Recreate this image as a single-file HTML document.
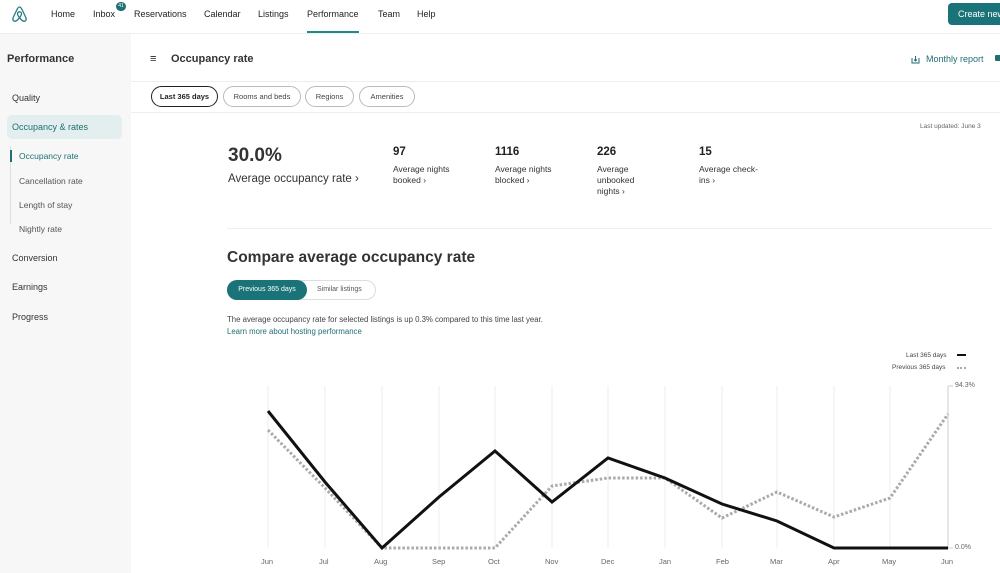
<!DOCTYPE html>
<html><head><meta charset="utf-8"><style>
*{margin:0;padding:0;box-sizing:border-box}
body{width:1000px;height:573px;overflow:hidden;font-family:"Liberation Sans",sans-serif;color:#222;background:#fff;position:relative}
.a{position:absolute;white-space:nowrap}
.nav{font-size:9px;top:9px}
.pill{position:absolute;top:86px;height:21px;border:1px solid #bbb;border-radius:11px;font-size:7.5px;line-height:19px;text-align:center;color:#444}
.side{font-size:9px;color:#333}
.sub{font-size:8.5px;color:#555}
.st{font-size:8.5px;line-height:11px;color:#333}
.st b{font-size:11.5px;display:block;margin-bottom:6px;color:#222}
.ml{font-size:7.5px;color:#666;top:557px}
</style></head><body>
<svg class="a" style="left:11px;top:5px" width="17" height="18" viewBox="0 0 17 18"><path d="M8.5 2C7 2 6.5 3.5 5.5 5.5L2.2 12.5C1 15 3 17 5 16c1.5-.7 2.5-2 3.5-3.3C9.5 14 10.5 15.3 12 16c2 1 4-1 2.8-3.5L11.5 5.5C10.5 3.5 10 2 8.5 2zM8.5 12.7C7.3 11.3 6.5 10 6.5 8.8a2 2 0 014 0c0 1.2-.8 2.5-2 3.9z" fill="none" stroke="#2a7d83" stroke-width="1.3"/></svg>
<div class="a nav" style="left:51px">Home</div>
<div class="a nav" style="left:93px">Inbox</div>
<div class="a" style="left:116px;top:2px;width:10px;height:9px;border-radius:5px;background:#1f6f74;color:#fff;font-size:5px;text-align:center;line-height:9px">41</div>
<div class="a nav" style="left:134px">Reservations</div>
<div class="a nav" style="left:204px">Calendar</div>
<div class="a nav" style="left:258px">Listings</div>
<div class="a nav" style="left:307px">Performance</div>
<div class="a" style="left:307px;top:31px;width:52px;height:2px;background:#1f8a8a"></div>
<div class="a nav" style="left:378px">Team</div>
<div class="a nav" style="left:417px">Help</div>
<div class="a" style="left:948px;top:3px;width:60px;height:22px;border-radius:4px;background:#1a7378;color:#fff;font-size:9px;line-height:22px;padding-left:10px">Create new</div>
<div class="a" style="left:0;top:33px;width:1000px;height:1px;background:#eee"></div>
<div class="a" style="left:0;top:34px;width:131px;height:539px;background:#f7f7f7"></div>
<div class="a" style="left:7px;top:53px;font-size:11px;font-weight:bold;color:#333">Performance</div>
<div class="a side" style="left:12px;top:93px">Quality</div>
<div class="a" style="left:7px;top:115px;width:115px;height:24px;border-radius:5px;background:#e3eeee"></div>
<div class="a side" style="left:12px;top:122px;color:#1f6f74">Occupancy &amp; rates</div>
<div class="a" style="left:10px;top:146px;width:1px;height:78px;background:#ddd"></div>
<div class="a" style="left:10px;top:150px;width:1.5px;height:12px;background:#1f6f74"></div>
<div class="a sub" style="left:19px;top:151px;color:#1f6f74">Occupancy rate</div>
<div class="a sub" style="left:19px;top:176px">Cancellation rate</div>
<div class="a sub" style="left:19px;top:200px">Length of stay</div>
<div class="a sub" style="left:19px;top:224px">Nightly rate</div>
<div class="a side" style="left:12px;top:253px">Conversion</div>
<div class="a side" style="left:12px;top:282px">Earnings</div>
<div class="a side" style="left:12px;top:312px">Progress</div>
<div class="a" style="left:150px;top:53px;font-size:11px">≡</div>
<div class="a" style="left:171px;top:53px;font-size:11px;font-weight:bold;color:#333">Occupancy rate</div>
<svg class="a" style="left:911px;top:55px" width="9" height="9" viewBox="0 0 9 9"><path d="M1 3v5h7V3M4.5 1v5M3 4.5l1.5 1.5L6 4.5" fill="none" stroke="#1f6f74" stroke-width="1"/></svg>
<div class="a" style="left:926px;top:54px;font-size:9px;color:#1f6f74">Monthly report</div>
<div class="a" style="left:995px;top:55px;width:6px;height:6px;background:#1f6f74;border-radius:1px"></div>
<div class="a" style="left:131px;top:81px;width:869px;height:1px;background:#eee"></div>
<div class="pill" style="left:151px;width:67px;border:1.5px solid #222;color:#222;font-weight:bold">Last 365 days</div>
<div class="pill" style="left:223px;width:78px">Rooms and beds</div>
<div class="pill" style="left:305px;width:49px">Regions</div>
<div class="pill" style="left:359px;width:56px">Amenities</div>
<div class="a" style="left:131px;top:112px;width:869px;height:1px;background:#eee"></div>
<div class="a" style="left:920px;top:123px;font-size:6.5px;color:#666">Last updated: June 3</div>
<div class="a" style="left:228px;top:145px;font-size:19px;font-weight:bold;color:#333">30.0%</div>
<div class="a" style="left:228px;top:173px;font-size:11.5px;color:#333">Average occupancy rate ›</div>
<div class="a st" style="left:393px;top:147px"><b>97</b>Average nights<br>booked ›</div>
<div class="a st" style="left:495px;top:147px"><b>1116</b>Average nights<br>blocked ›</div>
<div class="a st" style="left:597px;top:147px"><b>226</b>Average<br>unbooked<br>nights ›</div>
<div class="a st" style="left:699px;top:147px"><b>15</b>Average check-<br>ins ›</div>
<div class="a" style="left:227px;top:228px;width:765px;height:1px;background:#eee"></div>
<div class="a" style="left:227px;top:249px;font-size:15.5px;font-weight:bold;color:#333">Compare average occupancy rate</div>
<div class="a" style="left:227px;top:280px;width:149px;height:20px;border:1px solid #ddd;border-radius:10px"></div>
<div class="a" style="left:227px;top:280px;width:80px;height:20px;border-radius:10px;background:#1a7378;color:#fff;font-size:7px;line-height:20px;text-align:center">Previous 365 days</div>
<div class="a" style="left:317px;top:286px;font-size:7px;color:#555">Similar listings</div>
<div class="a" style="left:227px;top:315px;font-size:7.8px;color:#444">The average occupancy rate for selected listings is up 0.3% compared to this time last year.</div>
<div class="a" style="left:227px;top:327px;font-size:7.8px;color:#1f6f74">Learn more about hosting performance</div>
<div class="a" style="left:906px;top:352px;font-size:6.5px;color:#444">Last 365 days</div>
<div class="a" style="left:957px;top:354px;width:9px;height:2px;background:#111"></div>
<div class="a" style="left:892px;top:364px;font-size:6.5px;color:#444">Previous 365 days</div>
<div class="a" style="left:957px;top:367px;width:9px;height:0;border-top:2px dotted #aaa"></div>
<div class="a" style="left:955px;top:382px;font-size:7px;color:#666">94.3%</div>
<div class="a" style="left:955px;top:544px;font-size:7px;color:#666">0.0%</div>
<svg class="a" style="left:0;top:0" width="1000" height="573">
<g stroke="#eee" stroke-width="1">
<line x1="268" y1="386" x2="268" y2="548"/><line x1="325" y1="386" x2="325" y2="548"/><line x1="382" y1="386" x2="382" y2="548"/><line x1="439" y1="386" x2="439" y2="548"/><line x1="495" y1="386" x2="495" y2="548"/><line x1="552" y1="386" x2="552" y2="548"/><line x1="608" y1="386" x2="608" y2="548"/><line x1="665" y1="386" x2="665" y2="548"/><line x1="722" y1="386" x2="722" y2="548"/><line x1="777" y1="386" x2="777" y2="548"/><line x1="834" y1="386" x2="834" y2="548"/><line x1="890" y1="386" x2="890" y2="548"/>
</g>
<g stroke="#ccc" stroke-width="1"><line x1="948" y1="386" x2="948" y2="548"/><line x1="948" y1="386" x2="953" y2="386"/><line x1="948" y1="548" x2="953" y2="548"/></g>
<polyline fill="none" stroke="#aaa" stroke-width="3" stroke-dasharray="2.5 2" points="268,430 325,488 382,548 439,548 495,548 552,486 608,478 665,478 722,518 777,492 834,517 890,498 948,414"/>
<polyline fill="none" stroke="#111" stroke-width="3" points="268,411 325,482 382,548 439,497 495,451 552,502 608,458 665,478 722,504 777,521 834,548 890,548 948,548"/>
</svg>
<div class="a ml" style="left:261px">Jun</div><div class="a ml" style="left:319px">Jul</div><div class="a ml" style="left:374px">Aug</div><div class="a ml" style="left:432px">Sep</div><div class="a ml" style="left:488px">Oct</div><div class="a ml" style="left:545px">Nov</div><div class="a ml" style="left:601px">Dec</div><div class="a ml" style="left:659px">Jan</div><div class="a ml" style="left:716px">Feb</div><div class="a ml" style="left:770px">Mar</div><div class="a ml" style="left:828px">Apr</div><div class="a ml" style="left:882px">May</div><div class="a ml" style="left:941px">Jun</div>
</body></html>
